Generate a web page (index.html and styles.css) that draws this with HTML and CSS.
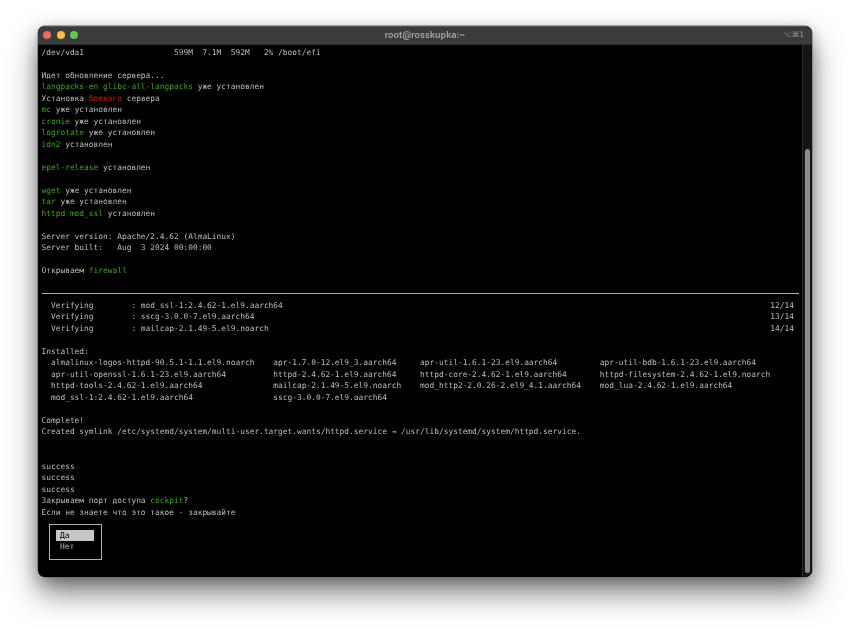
FILE: index.html
```html
<!DOCTYPE html>
<html lang="ru">
<head>
    <meta charset="UTF-8">
    <meta name="viewport" content="width=device-width, initial-scale=1.0">
    <title>root@rosskupka:~</title>
    <link rel="stylesheet" href="styles.css">
</head>
<body>
    <div class="window">
        <!-- Title bar -->
        <div class="titlebar">
            <div class="lights">
                <span class="light red"></span>
                <span class="light yellow"></span>
                <span class="light green"></span>
            </div>
            <div class="title">root@rosskupka:~</div>
            <div class="shortcut">⌥⌘1</div>
        </div>

        <!-- Terminal -->
        <div class="term">
            <div class="screen">
<pre>/dev/vda1                   599M  7.1M  592M   2% /boot/efi

Идет обновление сервера...
<span class="ok">langpacks-en glibc-all-langpacks</span> уже установлен
Установка <span class="err">боевого</span> сервера
<span class="ok">mc</span> уже установлен
<span class="ok">cronie</span> уже установлен
<span class="ok">logrotate</span> уже установлен
<span class="ok">idn2</span> установлен

<span class="ok">epel-release</span> установлен

<span class="ok">wget</span> уже установлен
<span class="ok">tar</span> уже установлен
<span class="ok">httpd mod_ssl</span> установлен

Server version: Apache/2.4.62 (AlmaLinux)
Server built:   Aug  3 2024 00:00:00

Открываем <span class="ok">firewall</span>

</pre>
                <div class="rule"></div>
                <div class="verify"><pre>  Verifying        : mod_ssl-1:2.4.62-1.el9.aarch64</pre><pre>12/14</pre></div>
                <div class="verify"><pre>  Verifying        : sscg-3.0.0-7.el9.aarch64</pre><pre>13/14</pre></div>
                <div class="verify"><pre>  Verifying        : mailcap-2.1.49-5.el9.noarch</pre><pre>14/14</pre></div>
<pre>

Installed:
  almalinux-logos-httpd-90.5.1-1.1.el9.noarch    apr-1.7.0-12.el9_3.aarch64     apr-util-1.6.1-23.el9.aarch64         apr-util-bdb-1.6.1-23.el9.aarch64
  apr-util-openssl-1.6.1-23.el9.aarch64          httpd-2.4.62-1.el9.aarch64     httpd-core-2.4.62-1.el9.aarch64       httpd-filesystem-2.4.62-1.el9.noarch
  httpd-tools-2.4.62-1.el9.aarch64               mailcap-2.1.49-5.el9.noarch    mod_http2-2.0.26-2.el9_4.1.aarch64    mod_lua-2.4.62-1.el9.aarch64
  mod_ssl-1:2.4.62-1.el9.aarch64                 sscg-3.0.0-7.el9.aarch64

Complete!
Created symlink /etc/systemd/system/multi-user.target.wants/httpd.service → /usr/lib/systemd/system/httpd.service.


success
success
success
Закрываем порт доступа <span class="ok">cockpit</span>?
Если не знаете что это такое - закрывайте</pre>
                <div class="dialog">
                    <div class="option selected">Да</div>
                    <div class="option">Нет</div>
                </div>
            </div>
            <div class="scrollbar"><div class="thumb"></div></div>
        </div>
    </div>
</body>
</html>
```

FILE: styles.css
```css
html, body {
    margin: 0;
    padding: 0;
    height: 627px;
    overflow: hidden;
    background-color: #ffffff;
}
body {
    padding: 26px 38px 0;
    box-sizing: border-box;
}
.window {
    height: 551px;
    display: flex;
    flex-direction: column;
    background-color: #000;
    border-radius: 7px;
    overflow: hidden;
    box-shadow: 0 0 0 0.5px #666, 0 16px 30px rgba(0, 0, 0, 0.5), 0 4px 14px rgba(0, 0, 0, 0.25);
}
.titlebar {
    height: 19px;
    flex: none;
    display: flex;
    align-items: center;
    justify-content: center;
    position: relative;
    padding-bottom: 3px;
    background-color: #3a3c3b;
    border-top: 1px solid #555;
    border-bottom: 1px solid #2c2c2c;
    box-sizing: border-box;
}
.lights {
    position: absolute;
    left: 5px;
    top: 4px;
    display: flex;
    gap: 5.5px;
}
.light {
    width: 8px;
    height: 8px;
    border-radius: 50%;
}
.red { background-color: #ec6a5e; }
.yellow { background-color: #f4bf4f; }
.green { background-color: #61c554; }
.title {
    font-family: "Inter", sans-serif;
    font-weight: 600;
    font-size: 9px;
    color: #a4a4a4;
    filter: blur(0.3px);
}
.shortcut {
    position: absolute;
    right: 8px;
    top: 3px;
    font-family: "DejaVu Sans", sans-serif;
    font-size: 7.5px;
    color: #9a9a9a;
}
.term {
    flex: 1;
    display: flex;
    min-height: 0;
}
.screen {
    flex: 1;
    padding: 1.5px 3px 0 3.5px;
    font-family: "DejaVu Sans Mono", monospace;
    font-size: 7.86px;
    line-height: 11.5px;
    color: #bcbcbc;
    filter: blur(0.35px);
}
pre {
    margin: 0;
    font: inherit;
}
.ok { color: #3fa51f; }
.err { color: #b5281a; }
.rule {
    height: 1px;
    margin: 5px 0 5.5px;
    background-color: #b0b0b0;
}
.verify {
    display: flex;
    justify-content: space-between;
    padding-right: 5px;
}
.dialog {
    width: 45px;
    height: 29px;
    margin: 5.5px 0 0 7.5px;
    padding: 5px 0 0 6px;
    border: 1px solid #b0b0b0;
}
.option {
    width: 38px;
    height: 11.5px;
    padding-left: 4px;
    box-sizing: border-box;
}
.selected {
    background-color: #c6c6c6;
    color: #000;
}
.scrollbar {
    width: 10px;
    flex: none;
    background-color: #151515;
    border-left: 1px solid #2a2a2a;
    box-sizing: border-box;
    padding: 104px 2px 4px 2px;
}
.thumb {
    height: 100%;
    border-radius: 3px;
    background-color: #8c8c8c;
}
```
